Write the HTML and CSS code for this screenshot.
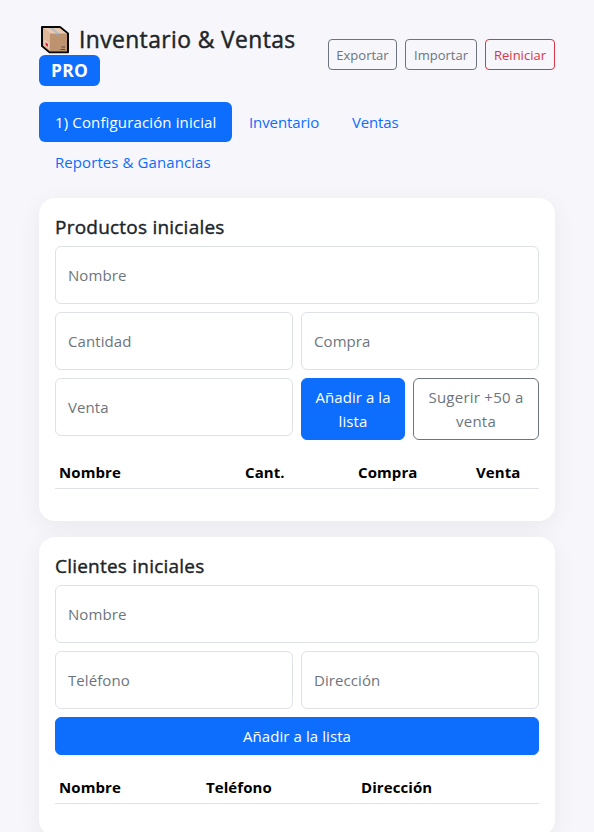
FILE: index.html
```html
<!DOCTYPE html>
<html lang="es">
<head>
<meta charset="utf-8">
<title>Inventario &amp; Ventas PRO</title>
<link rel="stylesheet" href="styles.css">
</head>
<body>
<div class="container">
  <header class="header">
    <h1 class="title">
      <span class="title-line">
        <svg class="box-icon" viewBox="0 0 30 30" aria-hidden="true">
          <path d="M2 2H20L28 8.5V27.3H9.5L2 21Z" fill="#b98f6c" stroke="#080808" stroke-width="2" stroke-linejoin="round"/>
          <path d="M3 3H19.7L27 8.8H10Z" fill="#eac9b0"/>
          <path d="M3 3L10 8.8V26.3L3 20.5Z" fill="#dfb798"/>
          <path d="M10 8.8H27V26.3H10Z" fill="#bd926e"/>
          <path d="M9.5 3H13L20 8.8V10.5H16.5V8.8Z" fill="#b4bdc2"/>
          <path d="M16.5 8.8H20V10.7H16.5Z" fill="#929ba1"/>
          <path d="M4.5 15L8.5 18V23L4.5 19.5Z" fill="#f4dcd7"/>
          <path d="M5.5 17L8 19V22L5.5 20Z" fill="#e51e3c"/>
          <path d="M21.5 22H25M20.5 24.5H25" stroke="#5e4938" stroke-width="1.2"/>
        </svg>
        <span class="title-text">Inventario &amp; Ventas</span>
      </span>
      <span class="badge">PRO</span>
    </h1>
    <div class="actions">
      <button class="btn btn-sm btn-gray w-export">Exportar</button>
      <button class="btn btn-sm btn-gray w-import">Importar</button>
      <button class="btn btn-sm btn-red w-reset">Reiniciar</button>
    </div>
  </header>

  <nav class="tabs">
    <a class="tab tab-active">1) Configuración inicial</a>
    <a class="tab tab-inventory">Inventario</a>
    <a class="tab tab-sales">Ventas</a>
    <a class="tab tab-reports">Reportes &amp; Ganancias</a>
  </nav>

  <section class="card">
    <h2 class="card-title">Productos iniciales</h2>
    <div class="form-grid">
      <div class="field full">Nombre</div>
      <div class="field">Cantidad</div>
      <div class="field">Compra</div>
      <div class="field">Venta</div>
      <div class="button-pair">
        <button class="btn btn-blue">Añadir a la lista</button>
        <button class="btn btn-gray btn-suggest">Sugerir +50 a venta</button>
      </div>
    </div>
    <table class="table products">
      <thead><tr><th>Nombre</th><th>Cant.</th><th>Compra</th><th>Venta</th></tr></thead>
    </table>
  </section>

  <section class="card">
    <h2 class="card-title">Clientes iniciales</h2>
    <div class="form-grid">
      <div class="field full">Nombre</div>
      <div class="field">Teléfono</div>
      <div class="field">Dirección</div>
      <button class="btn btn-blue full">Añadir a la lista</button>
    </div>
    <table class="table clients">
      <thead><tr><th>Nombre</th><th>Teléfono</th><th>Dirección</th></tr></thead>
    </table>
  </section>
</div>
</body>
</html>
```
FILE: styles.css
```css
* { box-sizing: border-box; }
html { overflow: hidden; }
body {
  margin: 0;
  height: 832px;
  overflow: hidden;
  background: #f6f6fb;
  color: #212529;
  font-family: "Open Sans", "Noto Sans", sans-serif;
  font-size: 15px;
  line-height: 24px;
}
.container { height: 832px; padding: 24px 39px 0; overflow: hidden; }
.header {
  display: flex;
  justify-content: space-between;
  align-items: center;
  height: 62px;
  margin-bottom: 16px;
}
.title { margin: 0; font-size: 22.8px; font-weight: 500; line-height: 31px; white-space: nowrap; }
.title-line { display: flex; align-items: center; height: 31px; }
.title-text { letter-spacing: 0.42px; -webkit-text-stroke: 0.45px #212529; }
.box-icon { width: 30px; height: 30px; margin: 0 9px 0 1px; }
.badge {
  display: block;
  width: 61px;
  height: 31px;
  border-radius: 6px;
  background: #0d6efd;
  color: #fff;
  font-size: 17.4px;
  font-weight: 700;
  letter-spacing: 0.2px;
  text-align: center;
}
.actions { display: flex; gap: 8px; margin-top: -1px; }
.btn {
  border: 1px solid;
  border-radius: 6px;
  padding: 6px 12px;
  background: transparent;
  font: inherit;
  letter-spacing: 0.08px;
  text-align: center;
}
.btn-suggest { letter-spacing: 0.25px; }
.btn-sm { height: 31px; padding: 1px 0 0; border-radius: 4px; font-size: 13px; line-height: 21px; letter-spacing: 0; }
.w-export { width: 69px; }
.w-import { width: 72px; }
.w-reset { width: 70px; }
.btn-gray { color: #6c757d; border-color: #6c757d; }
.btn-red { color: #dc3545; border-color: #dc3545; }
.btn-blue { color: #fff; background: #0d6efd; border-color: #0d6efd; }
.tabs { display: flex; flex-wrap: wrap; margin-bottom: 16px; }
.tab { height: 40px; padding: 8px 0 8px 16px; border-radius: 6px; color: #0d6efd; white-space: nowrap; }
.tab-active { width: 193px; background: #0d6efd; color: #fff; letter-spacing: 0.14px; }
.tab-inventory { width: 103px; margin-left: 1px; letter-spacing: -0.1px; }
.tab-sales { width: 79px; letter-spacing: -0.15px; }
.tab-reports { width: 188px; letter-spacing: 0.08px; }
.card {
  margin-bottom: 16px;
  padding: 16px 16px 32px;
  border-radius: 16px;
  background: #fff;
  box-shadow: 0 6px 24px rgba(0, 0, 0, 0.06);
}
.card-title {
  height: 24px;
  margin: 0 0 8px;
  padding-top: 1px;
  font-size: 19px;
  font-weight: 500;
  line-height: 24px;
  letter-spacing: 0.22px;
  -webkit-text-stroke: 0.4px #212529;
}
.form-grid { display: grid; grid-template-columns: 1fr 1fr; gap: 8px; align-items: start; }
.full { grid-column: 1 / -1; }
.field {
  height: 58px;
  padding: 16px 12px;
  border: 1px solid #dee2e6;
  border-radius: 6px;
  color: #6c757d;
  letter-spacing: 0.08px;
}
.button-pair { display: grid; grid-template-columns: 104px 126px; gap: 8px; height: 62px; }
.table { width: 100%; margin-top: 16px; border-collapse: collapse; table-layout: fixed; }
.table th { padding: 4px; border-bottom: 1px solid #dee2e6; color: #000; font-weight: 700; text-align: left; letter-spacing: 0.08px; }
.products th:nth-child(1) { width: 186px; }
.products th:nth-child(2) { width: 113px; }
.products th:nth-child(3) { width: 118px; }
.clients th:nth-child(1) { width: 147px; }
.clients th:nth-child(2) { width: 155px; }
```
